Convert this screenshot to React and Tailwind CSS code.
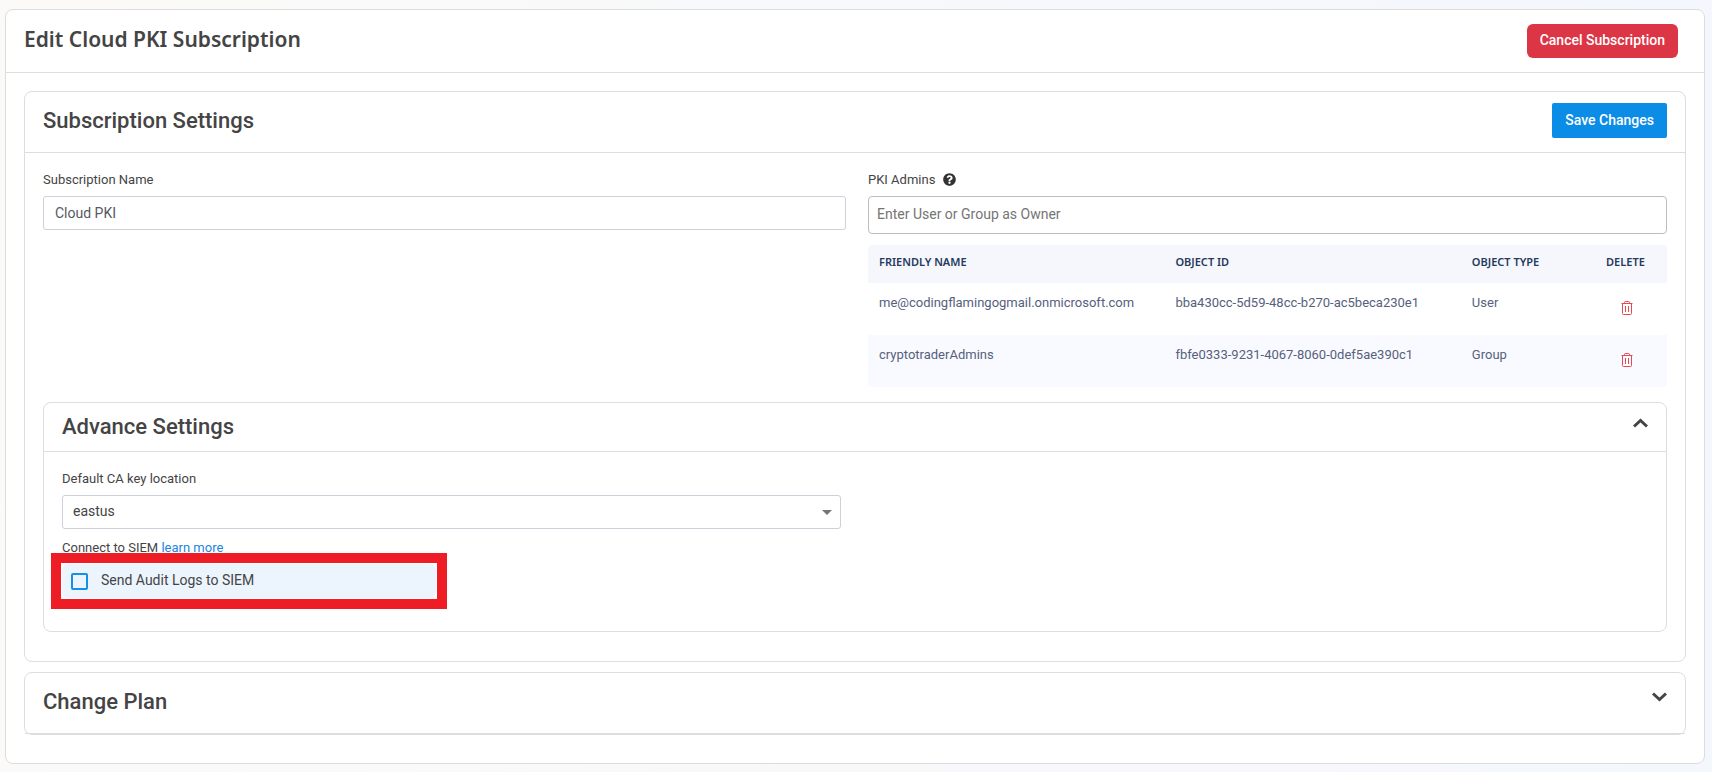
import React, { useState } from 'react';
import { FaQuestionCircle } from 'react-icons/fa';

const admins = [
  {
    name: 'me@codingflamingogmail.onmicrosoft.com',
    objectId: 'bba430cc-5d59-48cc-b270-ac5beca230e1',
    type: 'User',
  },
  {
    name: 'cryptotraderAdmins',
    objectId: 'fbfe0333-9231-4067-8060-0def5ae390c1',
    type: 'Group',
  },
];

const TrashIcon = () => (
  <svg width="12" height="14" viewBox="0 0 12 14" fill="none" stroke="currentColor" aria-hidden="true">
    <path d="M0.5 2.5h11" />
    <path d="M3.5 2.5v-1q0-1 1-1h3q1 0 1 1v1" />
    <path d="M1.5 2.5v10q0 1 1 1h7q1 0 1-1v-10" />
    <path d="M4.5 5v6M7.5 5v6" />
  </svg>
);

const Chevron = ({ up }) => (
  <svg width="15" height="10" viewBox="0 0 15 10" fill="none" stroke="currentColor" strokeWidth="3" aria-hidden="true">
    <path d={up ? 'M1 8.5L7.5 2.5L14 8.5' : 'M1 1.5L7.5 7.5L14 1.5'} />
  </svg>
);

const App = () => {
  const [name, setName] = useState('Cloud PKI');
  const [owner, setOwner] = useState('');
  const [rows, setRows] = useState(admins);
  const [location, setLocation] = useState('eastus');
  const [sendLogs, setSendLogs] = useState(false);
  const [advancedOpen, setAdvancedOpen] = useState(true);
  const [planOpen, setPlanOpen] = useState(false);

  const handleDelete = (objectId) => {
    setRows((prev) => prev.filter((r) => r.objectId !== objectId));
  };

  return (
    <div className="min-h-screen bg-linear-to-r from-[#fbfaf8] to-[#f4f7fd] pt-[9px] pr-[7px] pb-2 pl-[5px] font-['Roboto','Liberation_Sans',sans-serif] text-[#444444]">
      <main className="rounded-lg border border-[#dcdddd] bg-white">
        <header className="flex h-[63px] items-start justify-between border-b border-[#dcdddd] pt-[14px] pr-[26px] pl-[18px]">
          <h1 className="font-['Noto_Sans','Open_Sans',sans-serif] text-[21px] leading-[30px] font-semibold">
            Edit Cloud PKI Subscription
          </h1>
          <button type="button" className="h-[34px] rounded-md bg-[#dc3545] px-[13px] pb-0.5 text-[14px] font-medium text-white">
            Cancel Subscription
          </button>
        </header>

        <div className="px-[18px] pt-[18px] pb-7">
          {/* Subscription settings */}
          <section className="rounded-lg border border-[#dcdddd]">
            <div className="flex h-[61px] items-start justify-between border-b border-[#dcdddd] pt-[11px] pr-[18px] pl-[18px]">
              <h2 className="text-[22px] leading-9 font-medium">Subscription Settings</h2>
              <button type="button" className="h-[35px] rounded-xs bg-[#0b8ce6] px-[13px] text-[14px] font-medium text-white">
                Save Changes
              </button>
            </div>

            <div className="px-[18px] pt-[18px] pb-[29px]">
              <div className="grid grid-cols-[803fr_799fr] gap-[22px]">
                <div>
                  <label htmlFor="name" className="block pb-2 text-[13px] leading-[17px]">
                    Subscription Name
                  </label>
                  <input
                    id="name"
                    type="text"
                    value={name}
                    onChange={(e) => setName(e.target.value)}
                    className="h-[34px] w-full rounded-[3px] border border-[#ced0da] px-[11px] text-[14px] text-[#555a64] outline-none"
                  />
                </div>

                <div>
                  <label htmlFor="owner" className="flex items-center gap-2 pb-2 text-[13px] leading-[17px]">
                    PKI Admins
                    <FaQuestionCircle size={13} color="#333333" />
                  </label>
                  <input
                    id="owner"
                    type="text"
                    value={owner}
                    placeholder="Enter User or Group as Owner"
                    onChange={(e) => setOwner(e.target.value)}
                    className="block h-[38px] w-full rounded-sm border border-[#bdbdbd] px-2 pb-0.5 text-[14px] outline-none placeholder:text-[#757575]"
                  />

                  <table className="mt-[11px] w-full table-fixed overflow-hidden rounded-sm text-left text-[13px] text-[#56607d]">
                    <colgroup>
                      <col className="w-[37.1%]" />
                      <col className="w-[37.1%]" />
                      <col className="w-[16.8%]" />
                      <col />
                    </colgroup>
                    <thead className="bg-[#f6f7fd] font-['Noto_Sans','Open_Sans',sans-serif] text-[11px] text-[#253a5c] uppercase">
                      <tr className="h-[38px]">
                        <th className="px-[11px] pb-1 font-semibold">Friendly Name</th>
                        <th className="px-[11px] pb-1 font-semibold">Object ID</th>
                        <th className="px-[11px] pb-1 font-semibold">Object Type</th>
                        <th className="px-[11px] pb-1 font-semibold">Delete</th>
                      </tr>
                    </thead>
                    <tbody>
                      {rows.map((row) => (
                        <tr key={row.objectId} className="h-[52px] align-top even:bg-[#f9faff]">
                          <td className="px-[11px] pt-3 leading-4">{row.name}</td>
                          <td className="px-[11px] pt-3 leading-4">{row.objectId}</td>
                          <td className="px-[11px] pt-3 leading-4">{row.type}</td>
                          <td className="pt-[18px] pr-5 pl-[11px]">
                            <button
                              type="button"
                              aria-label={`Delete ${row.name}`}
                              onClick={() => handleDelete(row.objectId)}
                              className="mx-auto block text-[#e8494f]"
                            >
                              <TrashIcon />
                            </button>
                          </td>
                        </tr>
                      ))}
                    </tbody>
                  </table>
                </div>
              </div>

              {/* Advance settings */}
              <section className="mt-[15px] rounded-lg border border-[#dcdddd]">
                <h2 className="text-[22px] leading-[48px] font-medium">
                  <button
                    type="button"
                    aria-expanded={advancedOpen}
                    onClick={() => setAdvancedOpen(!advancedOpen)}
                    className="flex w-full items-center justify-between border-b border-[#dcdddd] px-[18px]"
                  >
                    Advance Settings
                    <span className="pb-2"><Chevron up={advancedOpen} /></span>
                  </button>
                </h2>

                {advancedOpen && (
                  <div className="px-[18px] pt-[18px] pb-[33px]">
                    <label htmlFor="location" className="block pb-2 text-[13px] leading-[17px]">
                      Default CA key location
                    </label>
                    <div className="relative w-[49.1%]">
                      <select
                        id="location"
                        value={location}
                        onChange={(e) => setLocation(e.target.value)}
                        className="block h-[34px] w-full appearance-none rounded-[3px] border border-[#ced0da] px-[10px] pb-0.5 text-[14px] outline-none"
                      >
                        <option>eastus</option>
                        <option>westus</option>
                      </select>
                      <svg width="10" height="5" viewBox="0 0 10 5" fill="#757575" aria-hidden="true" className="pointer-events-none absolute top-[15px] right-[9px]">
                        <path d="M0 0h10L5 5z" />
                      </svg>
                    </div>

                    <p className="pt-[10px] pb-2 text-[13px] leading-[17px]">
                      Connect to SIEM <a href="#siem" className="text-[#1b84e0]">learn more</a>
                    </p>
                    <div className="relative w-[374px]">
                      <label className="flex h-[34px] items-center gap-[13px] rounded-md bg-[#ecf5fd] px-[9px] text-[14px]">
                        <input
                          type="checkbox"
                          checked={sendLogs}
                          onChange={(e) => setSendLogs(e.target.checked)}
                          className="size-[17px] appearance-none rounded-xs border-2 border-[#1590e6] checked:bg-[#1590e6]"
                        />
                        <span className="pb-0.5">Send Audit Logs to SIEM</span>
                      </label>
                      {/* Highlight frame */}
                      <div className="pointer-events-none absolute -inset-[11px] border-10 border-[#ee1c24]" />
                    </div>
                  </div>
                )}
              </section>
            </div>
          </section>

          {/* Change plan */}
          <section className="mt-[10px] rounded-lg border border-[#dcdddd]">
            <h2 className="text-[22px] leading-9 font-medium">
              <button
                type="button"
                aria-expanded={planOpen}
                onClick={() => setPlanOpen(!planOpen)}
                className="flex h-[61px] w-full items-start justify-between border-b border-[#dcdddd] px-[18px] pt-[11px]"
              >
                Change Plan
                <span className="pt-2"><Chevron up={planOpen} /></span>
              </button>
            </h2>
          </section>
        </div>
      </main>
    </div>
  );
};

export default App;
